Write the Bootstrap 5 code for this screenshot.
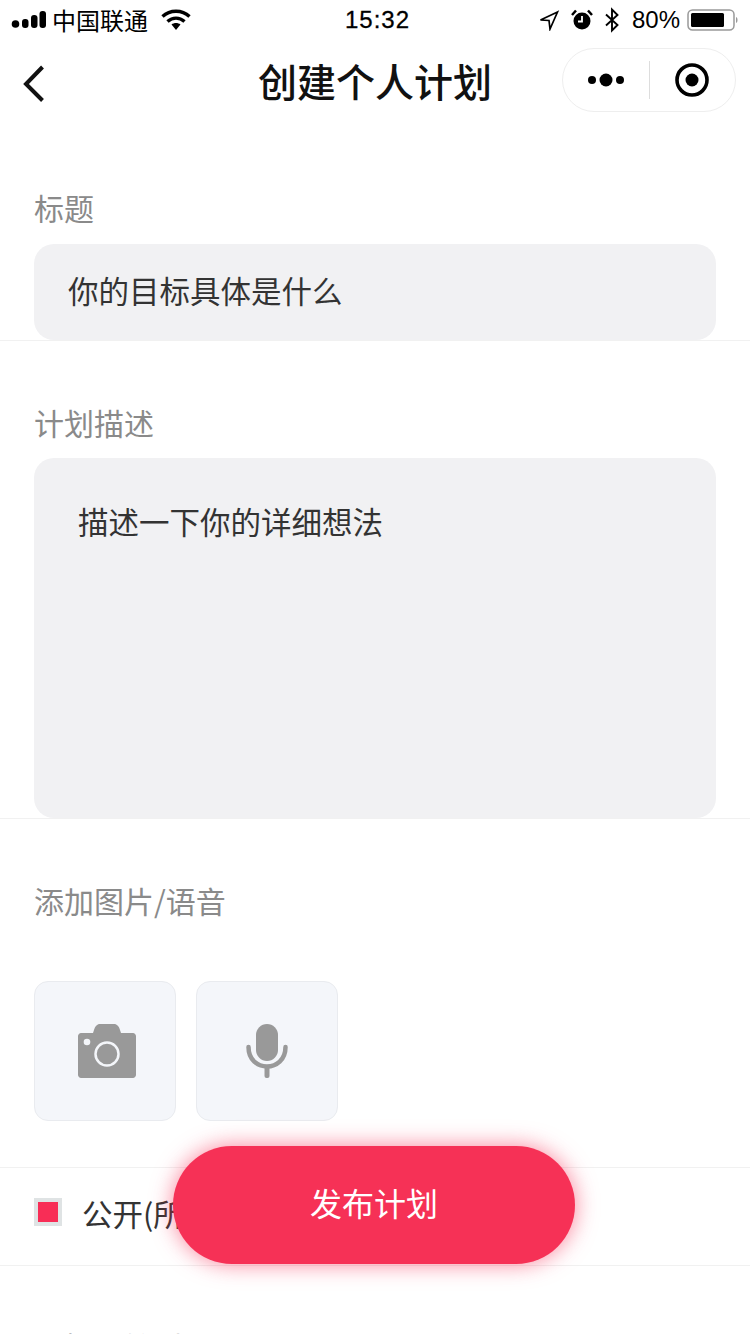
<!DOCTYPE html>
<html lang="zh-CN">
<head>
<meta charset="utf-8">
<title>创建个人计划</title>
<link href="https://cdn.jsdelivr.net/npm/bootstrap@5.3.0/dist/css/bootstrap.min.css" rel="stylesheet">
<style>
html, body { height: 1334px; overflow: hidden; }
body { font-family: "Noto Sans CJK SC", "Liberation Sans", sans-serif; color: #333; background: #fff; }
.phone { height: 1334px; overflow: hidden; position: relative; }
.statusbar { height: 40px; padding: 0 11px 0 11px; color: #000; font-size: 24px; line-height: 40px; }
.statusbar .sb-carrier { font-size: 24px; margin-left: 6px; margin-right: 13px; }
.statusbar .sb-time { font-family: "Liberation Sans", sans-serif; font-size: 24px; letter-spacing: 1px; left: 345px; top: 0; -webkit-text-stroke: .3px #000; }
.statusbar .sb-pct { font-family: "Liberation Sans", sans-serif; font-size: 24px; margin: 0 7px 0 0; }
.sb-gap { margin-right: 11px; }
.sb-gap-wide { margin-right: 12px; }
.navhead { height: 88px; padding: 0 14px 0 20px; }
.navhead-title { left: 0; right: 0; top: 15px; text-align: center; font-size: 39px; line-height: 50px; font-weight: 500; color: #111; }
.capsule { width: 174px; height: 64px; border: 1px solid #eee; border-radius: 32px; margin-top: -8px; background: #fff; }
.capsule-rule { width: 1px; height: 38px; background: #ddd; }
.capsule-cell { width: 86px; }
.field-label { font-size: 30px; line-height: 40px; color: #8a8a8a; padding-left: 34px; }
.hairline { border-bottom: 1px solid #f1f1f1; }
.sec-title { padding-top: 59px; }
.sec-title .input-box { margin-top: 17px; }
.sec-plan { padding-top: 61px; }
.input-box { margin: 16px 34px 0; background: #f1f1f3; border-radius: 20px; font-size: 30.5px; color: #333; }
.input-one { height: 96px; padding-left: 34px; line-height: 92px; }
.input-multi { height: 360px; padding: 42px 0 0 44px; line-height: 42px; }
.sec-media { padding-top: 61px; }
.tiles { margin: 61px 0 0 34px; padding-bottom: 46px; gap: 20px; }
.tile { width: 142px; height: 140px; background: #f4f6fa; border: 1px solid #e9ebef; border-radius: 14px; }
.tile-cam { padding-left: 4px; }
.check-row { height: 98px; padding-left: 34px; font-size: 30.5px; color: #333; }
.check-box { width: 28px; height: 28px; border: 4px solid #dfe3e4; background: #f82d56; margin-right: 21px; margin-top: -10px; }
.check-text { line-height: 42px; margin-top: -8px; margin-left: -1px; }
.next-label { padding-top: 60px; }
.publish { left: 173px; top: 1146px; width: 402px; height: 118px; padding-bottom: 12px; border: 0; border-radius: 59px; background: #f63156; color: #fff; font-size: 32px; box-shadow: 0 0 22px rgba(246,49,86,.6); }
.publish:hover, .publish:active { background: #f63156; color: #fff; }
</style>
</head>
<body>
<div class="phone">
  <div class="statusbar d-flex align-items-center position-relative">
    <svg width="35" height="18" viewBox="0 0 35 18" fill="#000"><circle cx="4.500" cy="13" r="3.800"/><rect x="11" y="8" width="6.500" height="9" rx="3"/><rect x="20" y="4" width="6.500" height="13" rx="3"/><rect x="28.500" y="0" width="6.500" height="17" rx="3"/></svg>
    <span class="sb-carrier">中国联通</span>
    <svg width="30" height="22" viewBox="0 0 30 22"><path d="M1.500 7.500C9 .5 21 .5 28.500 7.500M6.500 12.500c5-4.500 12-4.500 17 0" fill="none" stroke="#000" stroke-width="3.400"/><path d="M10.500 15.500c2.600-2 6.400-2 9 0L15 21z" fill="#000"/></svg>
    <span class="sb-time position-absolute">15:32</span>
    <div class="ms-auto d-flex align-items-center">
      <svg width="21" height="21" viewBox="0 0 21 21" class="sb-gap"><path d="M18.500 2 1.500 10l8.500.5 1 8.500z" fill="none" stroke="#000" stroke-width="1.700"/></svg>
      <svg width="22" height="22" viewBox="0 0 22 22" class="sb-gap"><circle cx="11" cy="12" r="8.500" fill="#000"/><path d="M11 7v5.500H7" fill="none" stroke="#fff" stroke-width="1.800"/><path d="M1 6l4-4.500M21 6l-4-4.500" stroke="#000" stroke-width="2.500"/></svg>
      <svg width="16" height="26" viewBox="0 0 16 26" class="sb-gap-wide"><path d="M2 7.500 13.500 18 8 23.500V2.500L13.500 8 2 18.500" fill="none" stroke="#000" stroke-width="1.900"/></svg>
      <span class="sb-pct">80%</span>
      <svg width="52" height="24" viewBox="0 0 52 24"><rect x="1" y="2" width="46" height="20" rx="4.500" fill="#fff" stroke="#999" stroke-width="1.500"/><rect x="4" y="5" width="33" height="14" rx="1.500" fill="#000"/><path d="M49 9c2 .5 2 5.500 0 6z" fill="#999"/></svg>
    </div>
  </div>

  <div class="navhead d-flex align-items-center justify-content-between position-relative">
    <svg width="26" height="38" viewBox="0 0 26 38"><path d="M22.500 2 6 19l16.500 16.500" fill="none" stroke="#111" stroke-width="4"/></svg>
    <div class="navhead-title position-absolute">创建个人计划</div>
    <div class="capsule d-flex align-items-center position-relative">
      <div class="capsule-cell d-flex justify-content-center">
        <svg width="38" height="14" viewBox="0 0 38 14" fill="#000"><circle cx="5" cy="7" r="4"/><circle cx="19" cy="7" r="6.500"/><circle cx="33" cy="7" r="4"/></svg>
      </div>
      <div class="capsule-rule"></div>
      <div class="capsule-cell d-flex justify-content-center">
        <svg width="34" height="34" viewBox="0 0 34 34"><circle cx="17" cy="17" r="15" fill="none" stroke="#000" stroke-width="3.600"/><circle cx="17" cy="17" r="6.500" fill="#000"/></svg>
      </div>
    </div>
  </div>

  <section class="sec-title hairline">
    <div class="field-label">标题</div>
    <div class="input-box input-one">你的目标具体是什么</div>
  </section>

  <section class="sec-plan hairline">
    <div class="field-label">计划描述</div>
    <div class="input-box input-multi">描述一下你的详细想法</div>
  </section>

  <section class="sec-media hairline">
    <div class="field-label">添加图片/语音</div>
    <div class="tiles d-flex">
      <div class="tile tile-cam d-flex align-items-center justify-content-center">
        <svg width="58" height="54" viewBox="0 0 58 54"><path d="M3 9h12l1-3c1-3.500 3-6 6-6h14c3 0 5 2.500 6 6l1 3h12c1.500 0 3 1.500 3 3v39c0 1.500-1.500 3-3 3H3c-1.500 0-3-1.500-3-3V12c0-1.500 1.500-3 3-3z" fill="#999"/><circle cx="29" cy="30" r="11.500" fill="none" stroke="#f4f6fa" stroke-width="2.500"/><circle cx="9" cy="18" r="3.300" fill="#f4f6fa"/></svg>
      </div>
      <div class="tile d-flex align-items-center justify-content-center">
        <svg width="42" height="54" viewBox="0 0 42 54"><rect x="10" y="0" width="22" height="37" rx="11" fill="#999"/><path d="M2.500 23c0 26 37 26 37 0" fill="none" stroke="#999" stroke-width="4.500" stroke-linecap="round"/><rect x="18.500" y="42" width="5" height="12" rx="2" fill="#999"/></svg>
      </div>
    </div>
  </section>

  <section class="check-row hairline d-flex align-items-center">
    <div class="check-box"></div>
    <div class="check-text">公开(所有人可见)</div>
  </section>

  <section class="next-label">
    <div class="field-label">选择开始时间</div>
  </section>

  <button type="button" class="btn publish position-absolute">发布计划</button>
</div>
<script src="https://cdn.jsdelivr.net/npm/bootstrap@5.3.0/dist/js/bootstrap.bundle.min.js"></script>
</body>
</html>
